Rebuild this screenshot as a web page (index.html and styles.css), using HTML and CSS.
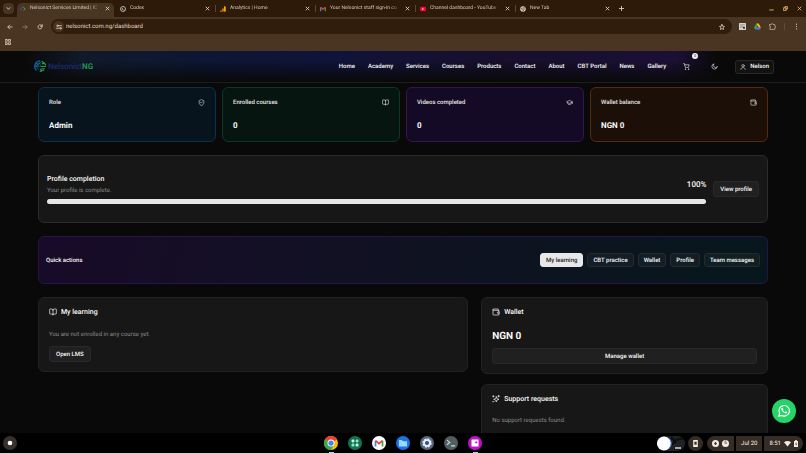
FILE: index.html
```html
<!DOCTYPE html>
<html lang="en">
<head>
<meta charset="utf-8">
<meta name="viewport" content="width=device-width, initial-scale=1">
<title>Nelsonict Services Limited</title>
<link rel="stylesheet" href="styles.css">
</head>
<body>
<svg class="defs" aria-hidden="true">
  <symbol id="book" viewBox="0 0 24 24"><path d="M12 6v15M3 18a1 1 0 0 1-1-1V4a1 1 0 0 1 1-1h5a4 4 0 0 1 4 4 4 4 0 0 1 4-4h5a1 1 0 0 1 1 1v13a1 1 0 0 1-1 1h-6a3 3 0 0 0-3 3 3 3 0 0 0-3-3z"/></symbol>
  <symbol id="wallet" viewBox="0 0 24 24"><path d="M19 7V4a1 1 0 0 0-1-1H5a2 2 0 0 0 0 4h15a1 1 0 0 1 1 1v4h-3a2 2 0 0 0 0 4h3a1 1 0 0 0 1-1v-2a1 1 0 0 0-1-1M3 5v14a2 2 0 0 0 2 2h15a1 1 0 0 0 1-1v-4"/></symbol>
  <symbol id="shield" viewBox="0 0 24 24"><path d="M20 13c0 5-3.500 7.500-7.700 9q-.3.100-.7 0C7.500 20.500 4 18 4 13V6a1 1 0 0 1 1-1c2 0 4.500-1.200 6.200-2.700a1.200 1.200 0 0 1 1.500 0C14.500 3.800 17 5 19 5a1 1 0 0 1 1 1zM9 12l2 2 4-4"/></symbol>
  <symbol id="cap" viewBox="0 0 24 24"><path d="M21.400 10.900a1 1 0 0 0 0-1.800L12.800 5.200a2 2 0 0 0-1.700 0L2.600 9.100a1 1 0 0 0 0 1.800l8.600 3.900a2 2 0 0 0 1.700 0zM22 10v6M6 12.500V16a6 3 0 0 0 12 0v-3.500"/></symbol>
  <symbol id="sparkles" viewBox="0 0 24 24"><path d="M13 5l2 6 6 2-6 2-2 6-2-6-6-2 6-2zM20 1v5M17.500 3.500h5M4 2v4M2 4h4M2 20h4"/></symbol>
  <symbol id="close" viewBox="0 0 24 24"><path d="M5 5l14 14M19 5L5 19"/></symbol>
</svg>

<header class="browser">
  <div class="tabs">
    <button class="tab-search" aria-label="Search tabs"><svg class="icon tiny" viewBox="0 0 24 24"><path d="M5 8l7 8 7-8"/></svg></button>
    <div class="tab active">
      <svg class="fav" viewBox="0 0 24 24"><path d="M13 3a9 9 0 0 0-8 14" fill="none" stroke="#3558a4" stroke-width="4"/><path d="M14 5l7 7-7 7" fill="none" stroke="#35a853" stroke-width="4"/></svg>
      <span class="tab-title">Nelsonict Services Limited | IC</span><button class="plain" aria-label="Close tab"><svg class="icon tiny"><use href="#close"/></svg></button>
    </div>
    <div class="tab">
      <svg class="fav" viewBox="0 0 24 24"><circle cx="12" cy="12" r="10" fill="none" stroke="#ddd" stroke-width="3"/><path d="M7 8l4 4-4 4M13 16h5" fill="none" stroke="#ddd" stroke-width="3"/></svg>
      <span class="tab-title">Codex</span><button class="plain" aria-label="Close tab"><svg class="icon tiny"><use href="#close"/></svg></button>
    </div>
    <div class="tab">
      <svg class="fav" viewBox="0 0 24 24"><rect x="16" y="1" width="7" height="22" rx="3" fill="#f9ab00"/><rect x="8.500" y="9" width="7" height="14" rx="3" fill="#e37400"/><circle cx="4" cy="20" r="3.500" fill="#e37400"/></svg>
      <span class="tab-title">Analytics | Home</span><button class="plain" aria-label="Close tab"><svg class="icon tiny"><use href="#close"/></svg></button>
    </div>
    <div class="tab">
      <svg class="fav" viewBox="0 0 24 24"><path d="M3 21V6" stroke="#4285f4" stroke-width="5"/><path d="M21 21V6" stroke="#34a853" stroke-width="5"/><path d="M3 5l9 8 9-8" fill="none" stroke="#ea4335" stroke-width="5"/></svg>
      <span class="tab-title">Your Nelsonict staff sign-in co</span><button class="plain" aria-label="Close tab"><svg class="icon tiny"><use href="#close"/></svg></button>
    </div>
    <div class="tab">
      <svg class="fav" viewBox="0 0 24 24"><rect y="3" width="24" height="18" rx="5" fill="#f03"/><path d="M9 8l7 4-7 4z" fill="#fff"/></svg>
      <span class="tab-title">Channel dashboard - YouTube</span><button class="plain" aria-label="Close tab"><svg class="icon tiny"><use href="#close"/></svg></button>
    </div>
    <div class="tab">
      <svg class="fav" viewBox="0 0 24 24"><circle cx="12" cy="12" r="11" fill="#eadbcb"/><circle cx="12" cy="12" r="5" fill="#eadbcb" stroke="#442b13" stroke-width="2"/><path d="M12 7h10M8 14L3 6M16 14l-5 9" stroke="#442b13" stroke-width="2"/></svg>
      <span class="tab-title">New Tab</span><button class="plain" aria-label="Close tab"><svg class="icon tiny"><use href="#close"/></svg></button>
    </div>
    <button class="plain new-tab" aria-label="New tab"><svg class="icon tiny" viewBox="0 0 24 24"><path d="M12 2v20M2 12h20"/></svg></button>
    <div class="window-buttons">
      <button class="plain" aria-label="Minimize"><svg class="icon tiny" viewBox="0 0 24 24"><path d="M3 19h18"/></svg></button>
      <button class="plain" aria-label="Restore"><svg class="icon tiny" viewBox="0 0 24 24"><path d="M3 9h12v12H3zM9 9V3h12v12h-6"/></svg></button>
      <button class="plain" aria-label="Close"><svg class="icon tiny"><use href="#close"/></svg></button>
    </div>
  </div>
  <div class="toolbar">
    <button class="plain" aria-label="Back"><svg class="icon small" viewBox="0 0 24 24"><path d="M21 12H4M11 4l-8 8 8 8"/></svg></button>
    <button class="plain dim" aria-label="Forward"><svg class="icon small" viewBox="0 0 24 24"><path d="M3 12h17M13 4l8 8-8 8"/></svg></button>
    <button class="plain" aria-label="Reload"><svg class="icon small" viewBox="0 0 24 24"><path d="M20 13a8 8 0 1 1-2-7l3 3M21 2v7h-7"/></svg></button>
    <div class="address">
      <span class="site-info"><svg class="icon small" viewBox="0 0 24 24"><path d="M11 7h11M2 17h11"/><circle cx="6" cy="7" r="3"/><circle cx="18" cy="17" r="3"/></svg></span>
      <input class="url" aria-label="Address" value="nelsonict.com.ng/dashboard">
      <button class="plain" aria-label="Bookmark"><svg class="icon small" viewBox="0 0 24 24"><path d="M12 2l3 7 7 .700-5.300 4.800L18.300 22 12 18l-6.300 4 1.600-7.500L2 9.700 9 9z"/></svg></button>
    </div>
    <div class="extensions">
      <svg class="ext" viewBox="0 0 24 24"><rect width="24" height="24" rx="2" fill="#d8d5d1"/><path d="M4 6h16M4 11h9M4 16h5" stroke="#6e6a67" stroke-width="2"/><path d="M12 13h8v7h-5z" fill="#29282a"/></svg>
      <svg class="ext" viewBox="0 0 24 24"><path d="M8 2h8l8 14h-8z" fill="#fbbc04"/><path d="M8 2l4 7-8 13-4-6z" fill="#34a853"/><path d="M8 15h16l-4 7H4z" fill="#4285f4"/><path d="M19 15h5l-4 7z" fill="#ea4335"/></svg>
      <svg class="icon ext" viewBox="0 0 24 24"><path d="M3 5h5c0-4 6-4 6 0h6v6c4 0 4 5 0 5v6H3v-6c4 0 4-5 0-5z"/></svg>
      <span class="split"></span>
      <button class="plain" aria-label="Menu"><svg class="dots ext" viewBox="0 0 24 24"><circle cx="12" cy="4" r="2"/><circle cx="12" cy="12" r="2"/><circle cx="12" cy="20" r="2"/></svg></button>
    </div>
  </div>
  <div class="bookmarks"><svg class="icon small" viewBox="0 0 24 24"><path d="M2 2h7v7H2zM15 2h7v7h-7zM2 15h7v7H2zM15 15h7v7h-7z"/></svg></div>
</header>

<div class="page">
  <header class="site-header">
    <a class="logo" href="#">
      <svg class="logo-mark" viewBox="0 0 36 36"><path d="M17 3A15 15 0 0 0 7 29" fill="none" stroke="#1b549b" stroke-width="4"/><path d="M17 8a10 10 0 0 0-5 18M2 17h13l5-5M5 10l9 2 4-6" fill="none" stroke="#1884a6" stroke-width="2"/><path d="M21 3l8 6M22 10h8l3 5M18 18h15M20 24h10M16 32l12-4M17 24l5 8" fill="none" stroke="#2d9c4e" stroke-width="3"/></svg>
      <span class="logo-text">Nelsonict<b>NG</b></span>
    </a>
    <nav class="nav">
      <a href="#">Home</a><a href="#">Academy</a><a href="#">Services</a><a href="#">Courses</a><a href="#">Products</a><a href="#">Contact</a><a href="#">About</a><a href="#">CBT Portal</a><a href="#">News</a><a href="#">Gallery</a>
    </nav>
    <button class="plain cart" aria-label="Cart"><svg class="icon regular" viewBox="0 0 24 24"><circle cx="8" cy="21" r="1"/><circle cx="19" cy="21" r="1"/><path d="M2 2h3l3 13h11l2-9H6"/></svg><span class="badge">0</span></button>
    <button class="plain theme" aria-label="Theme"><svg class="icon regular" viewBox="0 0 24 24"><path d="M21 13.500A9 9 0 1 1 10.500 3 7 7 0 0 0 21 13.500z"/></svg></button>
    <button class="btn user"><svg class="icon small" viewBox="0 0 24 24"><circle cx="12" cy="7" r="5"/><path d="M3 22c0-11 18-11 18 0"/></svg>Nelson</button>
  </header>

  <main class="content">
    <section class="stats">
      <article class="stat role"><div class="stat-head"><h2>Role</h2><svg class="icon regular"><use href="#shield"/></svg></div><p>Admin</p></article>
      <article class="stat courses"><div class="stat-head"><h2>Enrolled courses</h2><svg class="icon regular"><use href="#book"/></svg></div><p>0</p></article>
      <article class="stat videos"><div class="stat-head"><h2>Videos completed</h2><svg class="icon regular"><use href="#cap"/></svg></div><p>0</p></article>
      <article class="stat balance"><div class="stat-head"><h2>Wallet balance</h2><svg class="icon regular"><use href="#wallet"/></svg></div><p>NGN 0</p></article>
    </section>

    <section class="card profile">
      <div class="profile-main">
        <div class="profile-row">
          <div><h2 class="title">Profile completion</h2><p class="muted">Your profile is complete.</p></div>
          <span class="percent">100%</span>
        </div>
        <div class="bar" role="progressbar" aria-label="Profile completion" aria-valuenow="100"></div>
      </div>
      <button class="btn roomy">View profile</button>
    </section>

    <section class="quick">
      <h2>Quick actions</h2>
      <div class="actions"><button class="btn primary">My learning</button><button class="btn">CBT practice</button><button class="btn">Wallet</button><button class="btn">Profile</button><button class="btn">Team messages</button></div>
    </section>

    <div class="columns">
      <section class="card learning">
        <h2 class="title"><svg class="icon medium"><use href="#book"/></svg>My learning</h2>
        <p class="muted">You are not enrolled in any course yet.</p>
        <button class="btn roomy">Open LMS</button>
      </section>
      <div class="side">
        <section class="card wallet">
          <h2 class="title"><svg class="icon medium"><use href="#wallet"/></svg>Wallet</h2>
          <p class="amount">NGN 0</p>
          <button class="btn roomy wide">Manage wallet</button>
        </section>
        <section class="card support">
          <h2 class="title"><svg class="icon medium"><use href="#sparkles"/></svg>Support requests</h2>
          <p class="muted">No support requests found.</p>
        </section>
      </div>
    </div>
  </main>
  <a class="whatsapp" href="#" aria-label="WhatsApp"><svg viewBox="0 0 24 24"><path d="M3 21l1.500-5A9 9 0 1 1 8 19.500z" fill="none" stroke="#fff" stroke-width="2"/><path d="M8.500 6.500c-2 1-1.500 4 1 6.500s5.500 4 7.500 2.500c1-1 .5-1.700-.3-2.100l-1.700-.8-1.500 1.400c-1.700-.6-2.700-1.700-3.400-3.100l1-1.200-.9-2.200c-.3-.9-.9-1.200-1.700-1z" fill="#fff"/></svg></a>
</div>

<footer class="shelf">
  <button class="launcher" aria-label="Launcher"><svg viewBox="0 0 24 24"><circle cx="12" cy="12" r="12" fill="#38302b"/><circle cx="12" cy="12" r="4" fill="#fff"/></svg></button>
  <div class="apps">
    <button class="plain app running" aria-label="Chrome"><svg viewBox="0 0 24 24"><circle cx="12" cy="12" r="12" fill="#fbbc04"/><path d="M12 12L1.600 6A12 12 0 0 1 22.400 6z" fill="#ea4335"/><path d="M12 12L1.600 6A12 12 0 0 0 12 24l5-9z" fill="#34a853"/><circle cx="12" cy="12" r="6" fill="#fff"/><circle cx="12" cy="12" r="4.500" fill="#4285f4"/></svg></button>
    <button class="plain app" aria-label="Apps"><svg viewBox="0 0 24 24"><circle cx="12" cy="12" r="12" fill="#117451"/><rect x="6" y="6" width="5" height="5" rx="2" fill="#c9ffe8"/><rect x="13" y="6" width="5" height="5" rx="2" fill="#8ce8bd"/><rect x="6" y="13" width="5" height="5" rx="2" fill="#8ce8bd"/><rect x="13" y="13" width="5" height="5" rx="2" fill="#c9ffe8"/></svg></button>
    <button class="plain app" aria-label="Gmail"><svg viewBox="0 0 24 24"><circle cx="12" cy="12" r="12" fill="#fff"/><path d="M6 18V8" stroke="#4285f4" stroke-width="3"/><path d="M18 18V8" stroke="#34a853" stroke-width="3"/><path d="M6 8l6 5 6-5" fill="none" stroke="#ea4335" stroke-width="3"/></svg></button>
    <button class="plain app" aria-label="Files"><svg viewBox="0 0 24 24"><circle cx="12" cy="12" r="12" fill="#1a73e8"/><path d="M5 7h5l2 2h7v9H5z" fill="#9ed7ff"/></svg></button>
    <button class="plain app" aria-label="Settings"><svg viewBox="0 0 24 24"><circle cx="12" cy="12" r="12" fill="#596579"/><circle cx="12" cy="12" r="6" fill="none" stroke="#e7eefb" stroke-width="4" stroke-dasharray="3 1.700"/><circle cx="12" cy="12" r="5" fill="none" stroke="#e7eefb" stroke-width="3"/><circle cx="12" cy="12" r="3" fill="#285398"/></svg></button>
    <button class="plain app" aria-label="Terminal"><svg viewBox="0 0 24 24"><circle cx="12" cy="12" r="12" fill="#535c60"/><path d="M5 7l5 4-5 4M12 17h7" fill="none" stroke="#b9e4d7" stroke-width="2"/></svg></button>
    <button class="plain app running" aria-label="Gallery"><svg viewBox="0 0 24 24"><circle cx="12" cy="12" r="12" fill="#c012c8"/><rect x="6" y="6" width="12" height="12" rx="1" fill="#fff"/><path d="M14 8l1 2 2 .5-2 1-1 2-1-2-2-1 2-.5z" fill="#c012c8"/></svg></button>
  </div>
  <div class="tray">
    <svg class="preview" viewBox="0 0 56 30"><rect width="56" height="30" rx="15" fill="#202225"/><path d="M28 2l9 10-8 5M36 8l16-3M35 25h12" stroke="#0c0e10" stroke-width="4" fill="none"/><path d="M36 24h12" stroke="#ddd" stroke-width="3"/><circle cx="14" cy="15" r="14" fill="#fff"/><path d="M23 4c7 7 7 15 0 22" stroke="#4d91f0" stroke-width="2" fill="none"/></svg>
    <button class="pill round" aria-label="Phone"><svg viewBox="0 0 24 24"><path d="M4 0h16v24H4z" fill="#f4ebe5"/><path d="M8 6h8v10H8z" fill="#3a302a"/></svg></button>
    <div class="pill-group">
      <button class="pill" aria-label="Notifications"><svg viewBox="0 0 24 24"><circle cx="12" cy="12" r="12" fill="#f4ebe5"/><path d="M12 6l5 6-5 6-5-6z" fill="#3a302a"/></svg><span class="count">6</span></button>
      <button class="pill">Jul 20</button>
      <button class="pill">8:51<svg viewBox="0 0 24 24"><path d="M0 8q12-10 24 0L12 22z" fill="#f4ebe5"/></svg><svg class="battery" viewBox="0 0 14 24"><path d="M4 0h6v3h4v21H0V3h4z" fill="#f4ebe5"/><path d="M8 8l-4 7h3v5l4-7H8z" fill="#3a302a"/></svg></button>
    </div>
  </div>
</footer>
</body>
</html>
```
FILE: styles.css
```css
* { box-sizing: border-box; }
body {
  margin: 0;
  height: 100vh;
  display: flex;
  flex-direction: column;
  overflow: hidden;
  background: #090909;
  color: #fafafa;
  font: 6px/9px Roboto, sans-serif;
  text-rendering: geometricPrecision;
}
h2, p { margin: 0; font-size: inherit; }
a { color: inherit; text-decoration: none; }
button { font: inherit; color: inherit; padding: 0; border: 0; cursor: pointer; text-rendering: inherit; }
svg { display: block; flex: none; }
.defs { width: 0; height: 0; position: absolute; }
.plain { background: none; display: flex; align-items: center; justify-content: center; }
.icon { fill: none; stroke: currentColor; stroke-width: 2; stroke-linecap: round; stroke-linejoin: round; }
.tiny { width: 5px; height: 5px; stroke-width: 4; }
.small { width: 6px; height: 6px; }
.regular { width: 7px; height: 7px; }
.medium { width: 8px; height: 8px; }

.browser { flex: none; background: #4a3422; color: #e9d8c6; }
.browser .small { stroke-width: 3; }
.tabs { height: 17px; display: flex; align-items: stretch; background: #2d1a08; }
.tab-search {
  width: 11px; height: 11px; margin: 3px;
  border-radius: 4px; background: #483420;
  display: grid; place-items: center;
}
.tab { position: relative; flex: 0 1 100px; min-width: 0; display: flex; align-items: center; gap: 4px; padding: 0 7px 0 3px; }
.tab:not(.active) + .tab::before { content: ""; position: absolute; left: -2px; top: 5px; width: 1px; height: 7px; background: #5a4530; }
.tab.active { flex-basis: 97px; margin: 3px 3px 0 0; padding: 0 4px 3px 3px; border-radius: 5px 5px 0 0; background: #4a3422; }
.fav { width: 6px; height: 6px; }
.tab-title {
  flex: 1; white-space: nowrap; color: #d9cab9; font-size: 5px;
  mask-image: linear-gradient(90deg, #000 85%, transparent);
}
.new-tab { margin-left: 2px; }
.window-buttons { margin-left: auto; display: flex; gap: 9px; padding-right: 4px; color: #f3bd7d; }
.toolbar { height: 19px; display: flex; align-items: center; gap: 9px; padding-left: 7px; }
.dim { opacity: .5; }
.address { flex: 1; height: 15px; margin-left: -1px; border-radius: 8px; background: #301d0c; display: flex; align-items: center; padding: 0 7px 0 2px; }
.site-info { width: 11px; height: 11px; border-radius: 50%; background: #49331f; display: grid; place-items: center; }
.url { flex: 1; min-width: 0; height: 13px; border: 0; padding: 0 0 0 2px; background: none; font: inherit; text-rendering: inherit; color: #e9d8c6; outline: 0; }
.extensions { display: flex; align-items: center; gap: 8px; padding-right: 6px; margin-left: -2px; }
.ext { width: 7px; height: 7px; }
.split { width: 1px; height: 7px; background: #644b36; }
.dots { fill: currentColor; }
.bookmarks { height: 15px; padding: 3px 5px; }

.page { position: relative; flex: 1; min-height: 0; overflow: hidden; }
.site-header {
  height: 32px; display: flex; align-items: center; padding: 0 32px 0 34px;
  border-bottom: 1px solid #1d1d1d;
  background:
    linear-gradient(180deg, transparent 30%, #090909 100%),
    linear-gradient(90deg, #090909 3%, #101a2a 10%, #0d1733 24%, #10133a 42%, #170f2c 62%, #1b1035 84%, #090909 89%);
}
.logo { display: flex; align-items: center; gap: 1px; }
.logo-mark { width: 13px; height: 13px; }
.logo-text { font-size: 8px; line-height: 9px; font-weight: 500; color: #1c2c70; }
.logo-text b { color: #279052; }
.nav { margin-left: auto; display: flex; gap: 13px; font-weight: 500; white-space: nowrap; }
.cart { position: relative; margin-left: 17px; }
.badge {
  position: absolute; left: 9px; top: -10px; width: 6px; height: 6px; border-radius: 50%;
  background: #f5f5f5; color: #222; font-size: 4px; line-height: 6px; text-align: center;
}
.theme { margin: 0 17px 0 21px; }
.btn {
  height: 14px; padding: 0 5px; border: 1px solid #29292b; border-radius: 3px;
  background: rgba(255, 255, 255, .04); font-weight: 500; white-space: nowrap;
}
.roomy { height: 16px; padding: 0 6px; }
.wide { width: 100%; }
.primary { background: #e8e8e8; border-color: #e8e8e8; color: #222; }
.user { display: flex; align-items: center; gap: 4px; padding: 0 4px; }

.content { padding: 4px 38px 0; display: flex; flex-direction: column; gap: 13px; }
.stats { display: grid; grid-template-columns: repeat(4, 1fr); gap: 6px; }
.stat { height: 55px; padding: 10px; border: 1px solid; border-radius: 6px; }
.stat-head { display: flex; justify-content: space-between; align-items: center; color: #e8e8e8; }
.stat h2 { font-weight: 500; }
.stat p { margin-top: 13px; font-size: 8px; line-height: 12px; font-weight: 700; }
.role { background: #07131d; border-color: #0b3148; }
.courses { background: #071511; border-color: #09382b; }
.videos { background: #150a25; border-color: #31164f; }
.balance { background: #1c0f07; border-color: #542b11; }

.card { border: 1px solid #222; border-radius: 6px; background: #171717; }
.title { display: flex; align-items: center; gap: 4px; font-size: 7px; font-weight: 500; line-height: 8px; }
.muted { color: #8c8c8c; }
.profile { height: 68px; padding: 0 8px; display: flex; align-items: center; gap: 7px; border-color: #2b2b2b; }
.profile-main { flex: 1; }
.profile-row { display: flex; justify-content: space-between; align-items: center; }
.profile-row .muted { margin-top: 3px; }
.percent { font-size: 8px; font-weight: 500; }
.bar { height: 5px; margin-top: 4px; border-radius: 3px; background: #e6e6e6; }
.quick {
  height: 48px; padding: 0 7px; display: flex; justify-content: space-between; align-items: center;
  border: 1px solid #24144a; border-radius: 6px;
  background: linear-gradient(110deg, #180a29, #101222 50%, #06171c);
}
.quick h2 { font-weight: 500; }
.actions { display: flex; gap: 4px; }
.columns { display: grid; grid-template-columns: 3fr 2fr; gap: 13px; align-items: start; }
.learning { height: 75px; padding: 10px; }
.learning .muted { margin: 14px 0 7px; }
.side { display: flex; flex-direction: column; gap: 10px; }
.wallet { height: 77px; padding: 10px; }
.amount { margin: 14px 0 4px; font-size: 10px; line-height: 14px; font-weight: 700; }
.support { height: 80px; padding: 10px; }
.support .muted { margin-top: 13px; }
.whatsapp {
  position: absolute; right: 10px; bottom: 10px; width: 24px; height: 24px;
  border-radius: 50%; background: #25d366; display: grid; place-items: center;
}
.whatsapp svg { width: 14px; height: 14px; }

.shelf { flex: none; height: 20px; padding: 0 3px; display: grid; grid-template-columns: 1fr auto 1fr; align-items: center; background: #000; }
.launcher { width: 14px; background: none; }
.apps { display: flex; gap: 10px; }
.app { position: relative; }
.app svg { width: 14px; height: 14px; }
.running::after { content: ""; position: absolute; bottom: -3px; width: 5px; height: 1px; background: #ccc; }
.tray { justify-self: end; display: flex; align-items: center; gap: 3px; color: #f4ebe5; }
.preview { width: 28px; height: 15px; }
.pill { height: 15px; padding: 0 5px; display: flex; align-items: center; gap: 3px; background: #362c26; white-space: nowrap; }
.pill svg { width: 7px; height: 7px; }
.pill .battery { width: 4px; }
.round { width: 15px; padding: 0; justify-content: center; border-radius: 50%; }
.pill-group { display: flex; gap: 2px; margin-left: 1px; }
.pill-group .pill:first-child { border-radius: 8px 0 0 8px; }
.pill-group .pill:last-child { border-radius: 0 8px 8px 0; }
.count { width: 7px; height: 7px; border-radius: 50%; background: #f4ebe5; color: #3a302a; font-size: 5px; line-height: 7px; text-align: center; }
```
